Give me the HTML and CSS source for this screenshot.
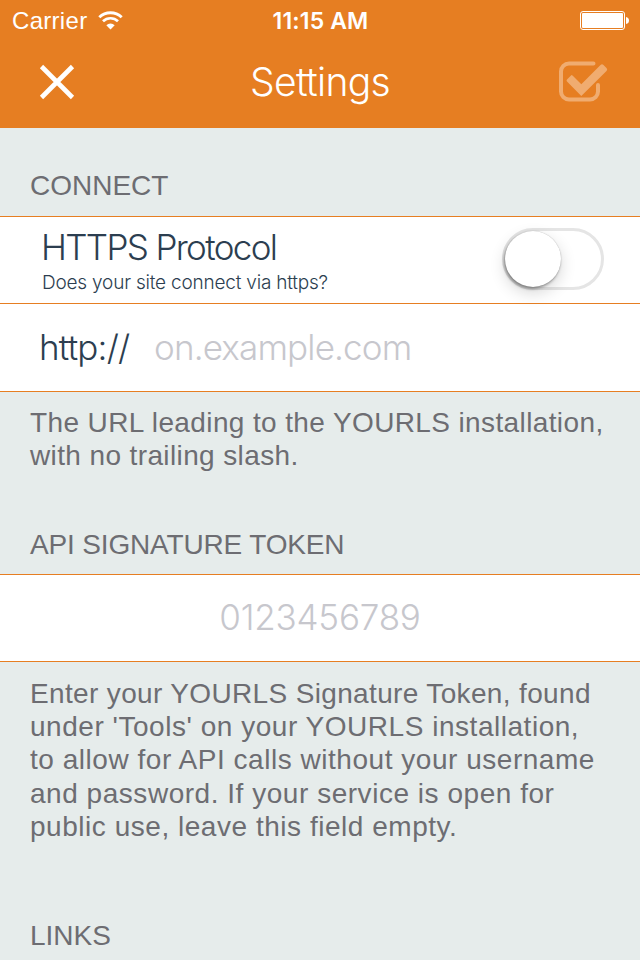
FILE: index.html
```
<!DOCTYPE html>
<html lang="en">
<head>
<meta charset="utf-8">
<title>Settings</title>
<link rel="stylesheet" href="styles.css">
</head>
<body>
<header class="top">
  <div class="status">
    <div class="carrier"><span>Carrier</span>
      <svg class="wifi" width="25" height="20" viewBox="0 0 25 20" fill="none" stroke="#fff"><path d="M1.300 6.200a16.200 16.200 0 0 1 22.400 0" stroke-width="2.900"/><path d="M5 10.300a10.700 10.700 0 0 1 15 0" stroke-width="2.700"/><path d="M8.300 14.300a6 6 0 0 1 8.400 0L12.500 18.500z" fill="#fff" stroke="none"/></svg>
    </div>
    <span class="clock">11:15 AM</span>
    <svg class="battery" width="49" height="20" viewBox="0 0 49 20"><rect x=".5" y=".5" width="44" height="18" rx="2.500" fill="none" stroke="#fff"/><rect x="2" y="2" width="41" height="15" rx="1" fill="#fff"/><path d="M46 6q3 .5 3 3.500t-3 3.500z" fill="#fff"/></svg>
  </div>
  <nav class="nav">
    <svg class="close" width="36" height="36" viewBox="0 0 36 36" stroke="#fff" stroke-width="4.600"><path d="M2.500 2.500 33.500 33.500M33.500 2.500 2.500 33.500"/></svg>
    <h1 class="title">Settings</h1>
    <svg class="done" width="50" height="42" viewBox="0 0 50 42"><path d="M34.500 2.500H10a8 8 0 0 0-8 8v20a8 8 0 0 0 8 8h21a8 8 0 0 0 8-8V24" fill="none" stroke="#f0ac70" stroke-width="4" stroke-linecap="round"/><path d="M13.500 14.500 22.300 23.300 41.500 4Q43 2.500 44.500 4L47.500 7Q49 8.500 47.500 10L22.300 35 8 20.600Q7 19.600 8 18.600L12 14.500Q12.700 13.700 13.500 14.500z" fill="#f0ac70"/></svg>
  </nav>
</header>
<main>
  <h2 class="heading">CONNECT</h2>
  <div class="row row-switch">
    <div class="labels">
      <div class="label">HTTPS Protocol</div>
      <div class="hint">Does your site connect via https?</div>
    </div>
    <div class="switch"><div class="knob"></div></div>
  </div>
  <div class="row row-url">
    <span class="scheme">http://</span>
    <span class="placeholder">on.example.com</span>
  </div>
  <p class="note">The URL leading to the YOURLS installation,<br>with no trailing slash.</p>
  <h2 class="heading heading-token">API SIGNATURE TOKEN</h2>
  <div class="row row-token"><span class="token">0123456789</span></div>
  <p class="note note-token"><span class="lead">Enter your YOURLS Signature Token, found</span><br>under 'Tools' on your YOURLS installation,<br>to allow for API calls without your username<br>and password. If your service is open for<br>public use, leave this field empty.</p>
  <h2 class="heading heading-links">LINKS</h2>
</main>
</body>
</html>
```
FILE: styles.css
```
* { box-sizing: border-box; }
body {
  margin: 0;
  height: 960px;
  overflow: hidden;
  background: #e6eceb;
  color: #6d6d72;
  font-family: "Liberation Sans", Arial, sans-serif;
}
h1, h2, p { margin: 0; font-weight: 400; }
svg { display: block; }
.top { height: 128px; background: #e67e22; color: #fff; }
.status, .nav {
  display: grid;
  grid-template-columns: 1fr auto 1fr;
  align-items: center;
}
.status { height: 42px; padding: 0 11px 0 12px; font-size: 24px; line-height: 42px; }
.carrier { display: flex; align-items: center; gap: 11px; letter-spacing: .3px; }
.clock { font: 600 23px/40px Inter, sans-serif; letter-spacing: .15px; }
.battery { justify-self: end; }
.nav { height: 79px; padding: 0 31px 0 39px; }
.title { font: 300 39px/79px Inter, sans-serif; letter-spacing: -.65px; margin: 0 4px 0 -4px; }
.done { justify-self: end; }
.heading { height: 88px; padding: 42px 30px 0; font-size: 28px; line-height: 32px; }
.row {
  display: flex;
  align-items: center;
  height: 88px;
  border-top: 1px solid #e67e22;
  background: #fff;
  color: #2c3e50;
  font: 300 35px/44px Inter, sans-serif;
}
.row-switch { height: 87px; }
.labels { flex: 1; padding-left: 42px; }
.label { height: 45px; margin-left: -1px; letter-spacing: -1.65px; }
.hint { font-size: 19px; line-height: 26px; letter-spacing: -.2px; }
.switch {
  align-self: flex-start;
  width: 102px;
  height: 62px;
  margin: 11px 36px 0 0;
  padding: 3px;
  border: 3px solid #e5e5e5;
  border-radius: 31px;
}
.knob {
  width: 56px;
  height: 56px;
  margin: -3px 0 0 -3px;
  border-radius: 50%;
  background: #fff;
  box-shadow: 0 0 1px rgba(0,0,0,.3), -1px 2px 3px rgba(0,0,0,.35), 0 6px 16px rgba(0,0,0,.16);
}
.row-url { height: 89px; padding: 0 0 2px 39px; border-bottom: 1px solid #e67e22; }
.scheme { width: 115px; letter-spacing: -.8px; }
.placeholder, .token { color: #c7c7cd; }
.placeholder { letter-spacing: -.85px; }
.note { padding: 14px 30px 0; font-size: 28px; line-height: 33.3px; letter-spacing: .38px; }
.heading-token { height: 101px; padding-top: 56px; letter-spacing: -.16px; }
.row-token { justify-content: center; padding-bottom: 2px; border-bottom: 1px solid #e67e22; letter-spacing: -.2px; }
.note-token { padding-top: 15.3px; letter-spacing: .53px; }
.lead { letter-spacing: .35px; }
.heading-links { padding-top: 76.700px; height: 118px; }
```
